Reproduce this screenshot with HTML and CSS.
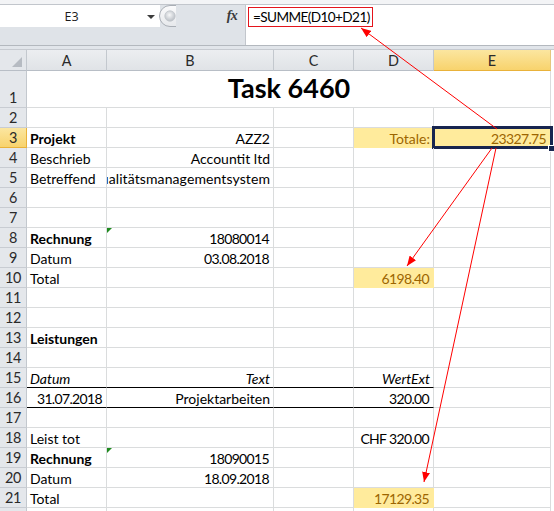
FILE: index.html
```html
<!DOCTYPE html>
<html lang="de">
<head>
<meta charset="utf-8">
<title>Task 6460</title>
<link rel="stylesheet" href="styles.css">
</head>
<body>
<div class="app">
  <div class="topstrip"></div>
  <div class="fbar">
    <div class="fbar-left">
      <div class="fbar-top">
        <div class="namebox"><span class="name">E3</span><span class="dd"></span></div>
        <div class="grip">
          <svg width="17" height="22" viewBox="0 0 17 22">
            <defs>
              <linearGradient id="gbg" x1="0" y1="0" x2="0" y2="1">
                <stop offset="0" stop-color="#fbfbfc"/>
                <stop offset="1" stop-color="#e6e8eb"/>
              </linearGradient>
              <radialGradient id="gdot" cx="0.45" cy="0.4" r="0.65">
                <stop offset="0" stop-color="#f7f8f9"/>
                <stop offset="1" stop-color="#b4b9c0"/>
              </radialGradient>
            </defs>
            <path d="M17,0.5 L11,0.5 A10.5,10.5 0 0 0 11,21.5 L17,21.5" fill="url(#gbg)" stroke="#a9aeb5" stroke-width="1"/>
            <circle cx="11" cy="11" r="5.2" fill="url(#gdot)" stroke="#c2c6cc" stroke-width="0.8"/>
          </svg>
        </div>
        <div class="spacer"></div>
        <div class="fx">fx</div>
      </div>
    </div>
    <div class="formula"><div class="fbox">=SUMME(D10+D21)</div></div>
  </div>
  <div class="sep"></div>

  <div class="sheet">
    <div class="corner"><span class="tri"></span></div>
    <div class="ch">A</div><div class="ch">B</div><div class="ch">C</div><div class="ch">D</div><div class="ch sel">E</div><div class="edge"></div>

    <div class="rh">1</div><div class="c title">Task 6460</div><div class="edge"></div>

    <div class="rh">2</div><div class="c"></div><div class="c"></div><div class="c"></div><div class="c"></div><div class="c"></div><div class="edge"></div>

    <div class="rh sel">3</div><div class="c b">Projekt</div><div class="c r">AZZ2</div><div class="c"></div><div class="c r y">Totale:</div><div class="c r n y active">23327.75</div><div class="edge"></div>

    <div class="rh">4</div><div class="c">Beschrieb</div><div class="c r">Accountit ltd</div><div class="c"></div><div class="c"></div><div class="c"></div><div class="edge"></div>

    <div class="rh">5</div><div class="c">Betreffend</div><div class="c r clip">Qualitätsmanagementsystem</div><div class="c"></div><div class="c"></div><div class="c"></div><div class="edge"></div>

    <div class="rh">6</div><div class="c"></div><div class="c"></div><div class="c"></div><div class="c"></div><div class="c"></div><div class="edge"></div>

    <div class="rh">7</div><div class="c"></div><div class="c"></div><div class="c"></div><div class="c"></div><div class="c"></div><div class="edge"></div>

    <div class="rh">8</div><div class="c b">Rechnung</div><div class="c r n flag">18080014</div><div class="c"></div><div class="c"></div><div class="c"></div><div class="edge"></div>

    <div class="rh">9</div><div class="c">Datum</div><div class="c r n">03.08.2018</div><div class="c"></div><div class="c"></div><div class="c"></div><div class="edge"></div>

    <div class="rh">10</div><div class="c">Total</div><div class="c"></div><div class="c"></div><div class="c r n y">6198.40</div><div class="c"></div><div class="edge"></div>

    <div class="rh">11</div><div class="c"></div><div class="c"></div><div class="c"></div><div class="c"></div><div class="c"></div><div class="edge"></div>

    <div class="rh">12</div><div class="c"></div><div class="c"></div><div class="c"></div><div class="c"></div><div class="c"></div><div class="edge"></div>

    <div class="rh">13</div><div class="c b">Leistungen</div><div class="c"></div><div class="c"></div><div class="c"></div><div class="c"></div><div class="edge"></div>

    <div class="rh">14</div><div class="c"></div><div class="c"></div><div class="c"></div><div class="c"></div><div class="c"></div><div class="edge"></div>

    <div class="rh">15</div><div class="c i tb">Datum</div><div class="c r i tb">Text</div><div class="c tb"></div><div class="c r i tb">WertExt</div><div class="c"></div><div class="edge"></div>

    <div class="rh">16</div><div class="c r n tb">31.07.2018</div><div class="c r tb">Projektarbeiten</div><div class="c tb"></div><div class="c r n tb">320.00</div><div class="c"></div><div class="edge"></div>

    <div class="rh">17</div><div class="c"></div><div class="c"></div><div class="c"></div><div class="c"></div><div class="c"></div><div class="edge"></div>

    <div class="rh">18</div><div class="c">Leist tot</div><div class="c"></div><div class="c"></div><div class="c r n">CHF 320.00</div><div class="c"></div><div class="edge"></div>

    <div class="rh">19</div><div class="c b">Rechnung</div><div class="c r n flag">18090015</div><div class="c"></div><div class="c"></div><div class="c"></div><div class="edge"></div>

    <div class="rh">20</div><div class="c">Datum</div><div class="c r n">18.09.2018</div><div class="c"></div><div class="c"></div><div class="c"></div><div class="edge"></div>

    <div class="rh">21</div><div class="c">Total</div><div class="c"></div><div class="c"></div><div class="c r n y">17129.35</div><div class="c"></div><div class="edge"></div>

    <div class="rh">22</div><div class="c"></div><div class="c"></div><div class="c"></div><div class="c"></div><div class="c"></div><div class="edge"></div>
  </div>

  <svg class="arrows" width="554" height="511" viewBox="0 0 554 511">
    <defs>
      <marker id="ah" viewBox="0 0 10 8" refX="10" refY="4" markerWidth="10" markerHeight="8" markerUnits="userSpaceOnUse" orient="auto">
        <path d="M0,0 L10,4 L0,8 z" fill="#ff0000"/>
      </marker>
    </defs>
    <line x1="497" y1="129" x2="361" y2="28" stroke="#ff0000" stroke-width="1" marker-end="url(#ah)"/>
    <line x1="492" y1="148" x2="407" y2="266" stroke="#ff0000" stroke-width="1" marker-end="url(#ah)"/>
    <line x1="496" y1="148" x2="424" y2="482" stroke="#ff0000" stroke-width="1" marker-end="url(#ah)"/>
  </svg>
</div>
</body>
</html>
```

FILE: styles.css
```css
html, body {
  margin: 0;
  padding: 0;
  background: #ffffff;
}

.app {
  position: relative;
  width: 554px;
  height: 511px;
  overflow: hidden;
  font-family: "Lato", "Open Sans", sans-serif;
  font-size: 14px;
  color: #000;
}

.topstrip {
  height: 4px;
  background: #f3f4f6;
}

.fbar {
  display: flex;
  height: 41px;
  box-sizing: border-box;
  border-top: 1px solid #c2c6cc;
}

.fbar-left {
  width: 245px;
  background: #dfe3e8;
}

.fbar-top {
  display: flex;
  height: 22px;
  align-items: stretch;
}

.namebox {
  width: 160px;
  background: #ffffff;
  display: flex;
  align-items: center;
}

.name {
  width: 143px;
  text-align: center;
  font-family: "Open Sans", "DejaVu Sans", sans-serif;
  font-size: 12.5px;
  color: #1b1b1b;
}

.dd {
  width: 0;
  height: 0;
  border-left: 4px solid transparent;
  border-right: 4px solid transparent;
  border-top: 4px solid #3c3c3c;
  margin-left: 4px;
  margin-top: 1px;
}

.grip {
  width: 17px;
  display: flex;
  margin-left: -1px;
}

.spacer {
  flex: 1;
}

.fx {
  width: 20px;
  margin-right: 3px;
  font-family: "Liberation Serif", "DejaVu Serif", serif;
  font-style: italic;
  font-weight: bold;
  font-size: 14px;
  color: #3a3a3a;
  display: flex;
  align-items: center;
  justify-content: center;
  letter-spacing: -0.5px;
}

.formula {
  flex: 1;
  background: #ffffff;
  border-left: 1px solid #c2c6cc;
  padding: 2px 0 0 2px;
}

.fbox {
  width: 125px;
  height: 20px;
  box-sizing: border-box;
  border: 1px solid #e4141c;
  padding-left: 4px;
  line-height: 18px;
  font-size: 13.6px;
  letter-spacing: -0.6px;
  white-space: nowrap;
}

.sep {
  height: 5px;
  box-sizing: border-box;
  border-top: 1px solid #b3b8be;
  border-bottom: 1px solid #c6cad0;
  background: #e1e5ea;
}

.sheet {
  display: grid;
  grid-template-columns: 27px 80px 167px 80px 80px 117px 3px;
  grid-template-rows: 21px 37px repeat(21, 20px);
}

.corner {
  background: #e4e7eb;
  border-right: 1px solid #c3c8ce;
  border-bottom: 1px solid #b8bec6;
  position: relative;
}

.tri {
  position: absolute;
  right: 4px;
  bottom: 3px;
  width: 0;
  height: 0;
  border-left: 10px solid transparent;
  border-bottom: 10px solid #b6bbc2;
}

.ch {
  background: linear-gradient(#eceef1, #e0e3e7);
  border-right: 1px solid #c3c8ce;
  border-bottom: 1px solid #b8bec6;
  display: flex;
  align-items: center;
  justify-content: center;
  color: #2a2a2a;
  padding-top: 1px;
  box-sizing: border-box;
  font-size: 14.4px;
}

.ch.sel {
  background: linear-gradient(#fbe6a0, #f8d36d);
  border-bottom: 1px solid #e9b23a;
  border-right: 1px solid #e5c77e;
}

.rh {
  background: #e4e7eb;
  border-right: 1px solid #c3c8ce;
  border-bottom: 1px solid #c8ccd2;
  display: flex;
  align-items: flex-end;
  justify-content: center;
  color: #2a2a2a;
  box-sizing: border-box;
  line-height: 17px;
  padding-bottom: 1px;
  font-size: 14.4px;
  letter-spacing: -0.4px;
}

.rh.sel {
  background: linear-gradient(#fbe6a0, #f8d36d);
  border-bottom: 1px solid #e9b23a;
  border-right: 1px solid #e9b23a;
}

.edge {
  background: #ffffff;
}

.c {
  box-sizing: border-box;
  border-right: 1px solid #dadcdd;
  border-bottom: 1px solid #dadcdd;
  display: flex;
  align-items: flex-end;
  padding: 0 3px 0 3px;
  line-height: 17px;
  white-space: nowrap;
  overflow: hidden;
  position: relative;
}

.c.r {
  justify-content: flex-end;
}

.c.n {
  letter-spacing: -0.65px;
  padding-right: 4px;
}

.c.b {
  font-weight: bold;
}

.c.i {
  font-style: italic;
}

.c.y {
  background: #ffeb9c;
  color: #9c6500;
  border-right-color: #ffeb9c;
  border-bottom-color: #ffeb9c;
}

.c.tb {
  border-bottom: 1px solid #000000;
}

.c.clip {
  padding-left: 0;
  letter-spacing: 0.1px;
}

.c.title {
  grid-column: 2 / 7;
  justify-content: center;
  font-weight: bold;
  font-size: 27px;
  line-height: 32px;
  padding-bottom: 3px;
  padding-left: 4px;
}

.c.active {
  overflow: visible;
}

.c.active::after {
  content: "";
  position: absolute;
  left: -2px;
  top: -2px;
  right: -3px;
  bottom: -2px;
  border: 3px solid #17254f;
  pointer-events: none;
}

.c.active::before {
  content: "";
  position: absolute;
  right: -5px;
  bottom: -5px;
  width: 5px;
  height: 5px;
  background: #17254f;
  border: 1px solid #ffffff;
  z-index: 2;
}

.c.flag::before {
  content: "";
  position: absolute;
  left: 0;
  top: 0;
  width: 0;
  height: 0;
  border-top: 5px solid #1e8a1e;
  border-right: 5px solid transparent;
}

.arrows {
  position: absolute;
  left: 0;
  top: 0;
  pointer-events: none;
}
```
